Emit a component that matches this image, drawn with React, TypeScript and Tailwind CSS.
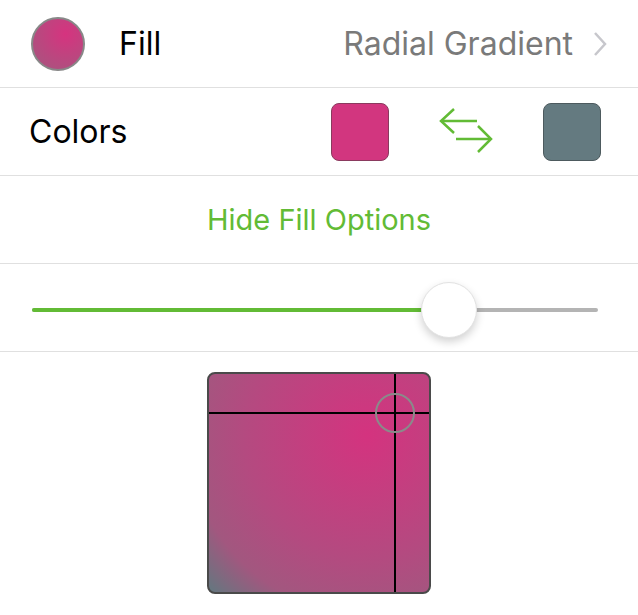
export default function App() {
  const value = 73.6;
  return (
    <div className="w-[638px] h-[615px] bg-white overflow-hidden" style={{ fontFamily: 'Inter, "Liberation Sans", sans-serif' }}>
      <div className="h-[88px] flex items-center border-b border-[#e0e0e0]">
        <div className="ml-[31px] w-[54px] h-[54px] rounded-full border-2 border-[#888888] bg-[radial-gradient(circle_at_65%_30%,#d6337f,#a3587f)]" />
        <span className="ml-[34px] text-[32px] text-black">Fill</span>
        <span className="ml-auto text-[32px] text-[#7a7a7a]">Radial Gradient</span>
        <svg className="ml-[20px] mr-[31px]" width="14" height="26" viewBox="0 0 14 26">
          <path d="M2 2 L12 13 L2 24" fill="none" stroke="#c7c7cc" strokeWidth="2.5" />
        </svg>
      </div>
      <div className="h-[88px] flex items-center border-b border-[#e0e0e0]">
        <span className="ml-[29px] text-[32px] text-black">Colors</span>
        <div className="ml-auto w-[58px] h-[58px] rounded-[8px] bg-[#d2367f] border border-[#8a3a5e]" />
        <svg className="ml-[50px]" width="54" height="48" viewBox="0 0 54 48">
          <g fill="none" stroke="#62bb35" strokeWidth="2.5">
            <path d="M2 13 H38" />
            <path d="M15 1 L2 13 L15 25" />
            <path d="M17 31 H52" />
            <path d="M39 18 L52 31 L39 44" />
          </g>
        </svg>
        <div className="ml-[50px] mr-[37px] w-[58px] h-[58px] rounded-[8px] bg-[#647a80] border border-[#4d5a5e]" />
      </div>
      <div className="h-[88px] flex items-center justify-center border-b border-[#e0e0e0]">
        <span className="text-[29px] text-[#62bb35]">Hide Fill Options</span>
      </div>
      <div className="h-[88px] flex items-center border-b border-[#e0e0e0] pl-[32px] pr-[40px] pt-[4px]">
        <div className="relative flex-1 h-[4px] rounded-full bg-[#b4b4b4]">
          <div className="absolute left-0 top-0 h-[4px] rounded-full bg-[#62bb35]" style={{ width: `${value}%` }} />
          <div
            className="absolute top-1/2 w-[56px] h-[56px] -translate-y-1/2 -translate-x-1/2 rounded-full bg-white border border-[#e2e2e2] shadow-[0_4px_8px_rgba(0,0,0,0.18)]"
            style={{ left: `${value}%` }}
          />
        </div>
      </div>
      <div className="flex justify-center pt-[20px]">
        <div className="relative w-[224px] h-[222px] rounded-[8px] border-2 border-[#4a4a4a] overflow-hidden bg-[radial-gradient(circle_farthest-corner_at_72%_28%,#d4337f_0%,#b44a80_55%,#a2577f_80%,#62787f_100%)]">
          <div className="absolute left-0 right-0 top-[38px] h-[2px] bg-black" />
          <div className="absolute top-0 bottom-0 left-[185px] w-[2px] bg-black" />
          <div className="absolute left-[166px] top-[19px] w-[40px] h-[40px] rounded-full border-2 border-[#8a8a8a]" />
        </div>
      </div>
    </div>
  );
}
